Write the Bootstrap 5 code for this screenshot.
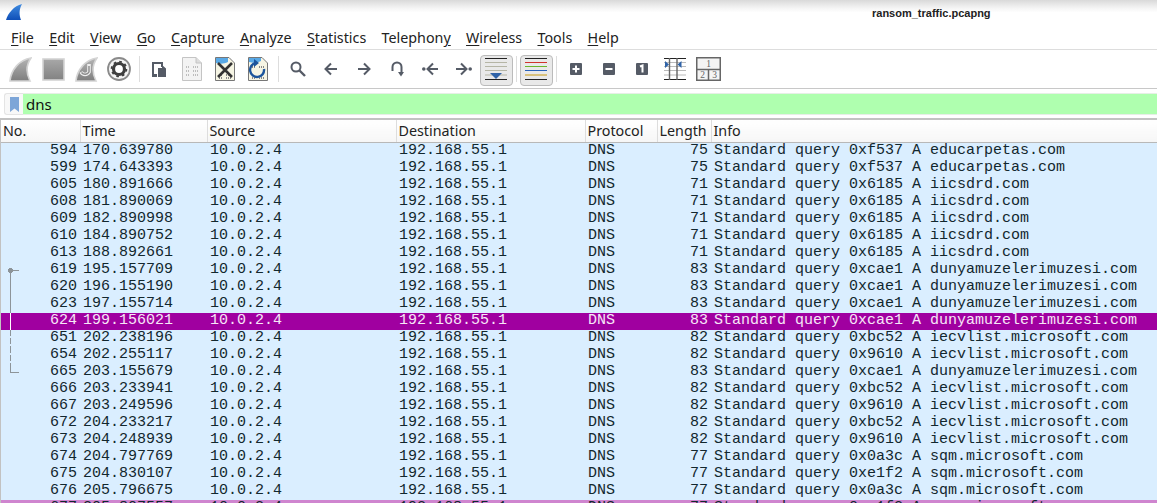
<!DOCTYPE html>
<html lang="en">
<head>
<meta charset="UTF-8">
<title>ransom_traffic.pcapng</title>
<link href="https://cdn.jsdelivr.net/npm/bootstrap@5.3.0/dist/css/bootstrap.min.css" rel="stylesheet">
<script src="https://cdn.jsdelivr.net/npm/bootstrap@5.3.0/dist/js/bootstrap.bundle.min.js"></script>
<style>
    html, body { height: 100%; }
    body { overflow: hidden; background: #fff; font-family: "Noto Sans", sans-serif; color: #222; }
    .titlebar { height: 25px; background: linear-gradient(#d9d9d9, #f4f4f4 32%, #fff 50%); padding-left: 6px; padding-top: 4px; }
    .winname { font-family: "Liberation Sans", sans-serif; font-weight: 700; font-size: 11px; left: 872px; top: 5px; color: #222; }
    .menubar { height: 25px; border-bottom: 1px solid #ddd; padding-left: 11px; font-size: 14.3px; line-height: 25px; gap: 15.3px; }
    .menubar u { text-underline-offset: 2px; text-decoration-thickness: 1px; }
    .toolstrip { height: 39px; padding-left: 3.5px; border-bottom: 1px solid #c8c8c8; }
    .toolbtn { width: 33px; height: 37px; flex: none; }
    .toolbtn.pressed::before { content: ""; position: absolute; left: 0; right: 0; top: 4px; bottom: 2px; background: #e9e9e9; border: 1px solid #bbb; border-radius: 4px; }
    .toolbtn svg { position: relative; }
    .toolsep { width: 7px; height: 26px; flex: none; }
    .toolsep::before { content: ""; display: block; width: 1px; height: 100%; margin: 0 auto; background: #ddd; }
    .filterbar { height: 31px; padding: 4px 0 0 4px; border-bottom: 2px solid #c2c2c2; }
    .markbtn { width: 19px; height: 22px; border: 1px solid #e4e4e4; border-right: 0; border-radius: 3px 0 0 3px; background: #f8f8f8; flex: none; }
    .filtertext { background: #afffaf; height: 22px; line-height: 20px; font-size: 15px; padding-left: 3px; color: #111; border-top: 1px solid #e6efe6; border-bottom: 1px solid #e6efe6; }
    .pktwrap { border-left: 1px solid #c2c2c2; }
    .pkt { table-layout: fixed; width: 1156px; border-collapse: collapse; font-family: "Liberation Mono", monospace; font-size: 15px; }
    .pkt th { height: 22px; padding: 1px 0 0 2px; background: linear-gradient(#fff, #f6f6f6); font-family: "Noto Sans", sans-serif; font-weight: 400; font-size: 14.3px; line-height: 20px; color: #222; border-right: 1px solid #ddd; border-bottom: 1px solid #b8b8b8; white-space: nowrap; overflow: hidden; }
    .pkt td { height: 17px; padding: 0 3px 2px; line-height: 15px; vertical-align: top; background: #daeeff; color: #12272e; white-space: nowrap; overflow: hidden; }
    .pkt th:last-child { border-right: 0; }
    .pkt tr.picked td { background: #a000a0; color: #f7e6f7; }
    .pkt tr.bad td { background: #cf85cf; }
    .rel { position: relative; }
    .rel::before { content: ""; position: absolute; left: 9px; top: 0; bottom: 0; width: 1px; background: #8d9499; }
    .rel-start::before { top: 8px; }
    .rel-start::after { content: ""; position: absolute; left: 7px; top: 6px; width: 11px; height: 5px; background: radial-gradient(circle at 2.5px 2.5px, #8d9499 2.3px, transparent 2.7px), linear-gradient(#8d9499, #8d9499) 2px 2px / 9px 1px no-repeat; }
    .rel-sel::before { background: #fff; }
    .rel-dash::before { background: repeating-linear-gradient(#8d9499 0 6px, transparent 6px 8px); }
    .rel-end::before { bottom: 8px; }
    .rel-end::after { content: ""; position: absolute; left: 9px; top: 8px; width: 9px; height: 1px; background: #8d9499; }
    .paneno { font-family: "Liberation Serif", serif; font-size: 9.5px; fill: #666; text-anchor: middle; }
</style>
</head>
<body>

<svg width="0" height="0" class="position-absolute">
    <defs>
        <linearGradient id="finBlue" x1="0" y1="0" x2="0" y2="1"><stop offset="0" stop-color="#3f8be0"/><stop offset="1" stop-color="#0f4fb8"/></linearGradient>
        <linearGradient id="finGray" x1="0" y1="0" x2="0" y2="1"><stop offset="0" stop-color="#b4b4b4"/><stop offset="1" stop-color="#7e7e7e"/></linearGradient>
        <linearGradient id="sqGray" x1="0" y1="0" x2="0" y2="1"><stop offset="0" stop-color="#a8a8a8"/><stop offset="1" stop-color="#828282"/></linearGradient>
    </defs>
</svg>

<div class="titlebar position-relative">
    <svg class="d-block" width="17" height="16" viewBox="0 0 17 16"><path d="M0 16C2 9 8 2 16 0C13 5 13 11 15 16Z" fill="url(#finBlue)"/></svg>
    <span class="winname position-absolute">ransom_traffic.pcapng</span>
</div>

<nav class="menubar d-flex">
    <span><u>F</u>ile</span><span><u>E</u>dit</span><span><u>V</u>iew</span><span><u>G</u>o</span><span><u>C</u>apture</span><span><u>A</u>nalyze</span><span><u>S</u>tatistics</span><span>Telephon<u>y</u></span><span><u>W</u>ireless</span><span><u>T</u>ools</span><span><u>H</u>elp</span>
</nav>

<div class="toolstrip d-flex align-items-center">
    <div class="toolbtn d-flex align-items-center justify-content-center"><svg width="23" height="25" viewBox="0 0 23 25"><path d="M1 24C2 13 10 3 22 1C17 8 17 16 21 24Z" fill="url(#finGray)" stroke="#d4d4d4" stroke-width="1.6"/></svg></div>
    <div class="toolbtn d-flex align-items-center justify-content-center"><svg width="23" height="23" viewBox="0 0 23 23"><rect x="1" y="1" width="21" height="21" fill="url(#sqGray)" stroke="#d4d4d4" stroke-width="1.6"/></svg></div>
    <div class="toolbtn d-flex align-items-center justify-content-center"><svg width="23" height="25" viewBox="0 0 23 25"><path d="M1 24C2 13 10 3 22 1C17 8 17 16 21 24Z" fill="url(#finGray)" stroke="#d4d4d4" stroke-width="1.6"/><path d="M14 7V15A4.5 4.5 0 0 1 6 15" fill="none" stroke="#eee" stroke-width="3.6"/><path d="M14 9V15A4.5 4.5 0 0 1 6.500 15.500" fill="none" stroke="#8a8a8a" stroke-width="1.4"/></svg></div>
    <div class="toolbtn d-flex align-items-center justify-content-center"><svg width="24" height="24" viewBox="0 0 24 24"><circle cx="12" cy="12" r="11" fill="#f4f4f4" stroke="#8a8a8a" stroke-width="1.8"/><circle cx="12" cy="12" r="5.500" fill="#fff" stroke="#3e3e3e" stroke-width="3.200"/><circle cx="12" cy="12" r="7.400" fill="none" stroke="#3e3e3e" stroke-width="1.800" stroke-dasharray="2.600 3.210"/></svg></div>
    <div class="toolsep"></div>
    <div class="toolbtn d-flex align-items-center justify-content-center"><svg width="15" height="15" viewBox="0 0 15 15"><path d="M0 0H11V5H5V15H0Z" fill="#555b66"/><path d="M2 2H9V5H5V12H2Z" fill="#fff"/><path d="M6 6H10V3L14 6.500V15H6Z" fill="#555b66"/></svg></div>
    <div class="toolbtn d-flex align-items-center justify-content-center"><svg width="20" height="24" viewBox="0 0 20 24"><path d="M.5.500H14L19.500 6V23.500H.5Z" fill="#f3f3f3" stroke="#c4c4c4"/><path d="M14 .5V6H19.500" fill="#ddd" stroke="#c4c4c4"/><path d="M4 10H8M11 10H16M4 14H8M11 14H16M4 18H8M11 18H16" stroke="#bdbdbd" stroke-width="2" stroke-dasharray="1 1"/></svg></div>
    <div class="toolbtn d-flex align-items-center justify-content-center"><svg width="20" height="24" viewBox="0 0 20 24"><path d="M.5.500H14L19.500 6V23.500H.5Z" fill="#f6f5e4" stroke="#777"/><path d="M1 1H13V5C9 7 5 7 1 6Z" fill="#59a9e6"/><path d="M4 18H8M11 18H16M4 21H8M11 21H16" stroke="#888" stroke-width="2" stroke-dasharray="1 1"/><path d="M3 6L17 20M17 6L3 20" stroke="#333" stroke-width="2.600"/></svg></div>
    <div class="toolbtn d-flex align-items-center justify-content-center"><svg width="20" height="24" viewBox="0 0 20 24"><path d="M.5.500H14L19.500 6V23.500H.5Z" fill="#f6f5e4" stroke="#777"/><path d="M1 1H13V4C9 6 5 6 1 5Z" fill="#59a9e6"/><path d="M4 10H8M11 10H16M4 21H8M11 21H16" stroke="#888" stroke-width="2" stroke-dasharray="1 1"/><path d="M8 6A7 7 0 1 0 16 12" fill="none" stroke="#1c559c" stroke-width="2.400"/><path d="M6 2V10L11 6Z" fill="#1c559c"/></svg></div>
    <div class="toolsep"></div>
    <div class="toolbtn d-flex align-items-center justify-content-center"><svg width="16" height="16" viewBox="0 0 16 16"><circle cx="6" cy="6" r="4.500" fill="none" stroke="#555b66" stroke-width="2"/><path d="M9.500 9.500L15 15" stroke="#555b66" stroke-width="2.400"/></svg></div>
    <div class="toolbtn d-flex align-items-center justify-content-center"><svg width="14" height="14" viewBox="0 0 14 14"><path d="M13 7H2M7 1.500L1.500 7L7 12.500" fill="none" stroke="#555b66" stroke-width="2"/></svg></div>
    <div class="toolbtn d-flex align-items-center justify-content-center"><svg width="14" height="14" viewBox="0 0 14 14"><path d="M1 7H12M7 1.500L12.500 7L7 12.500" fill="none" stroke="#555b66" stroke-width="2"/></svg></div>
    <div class="toolbtn d-flex align-items-center justify-content-center"><svg width="13" height="16" viewBox="0 0 13 16"><path d="M1.500 10V6A4.500 4.500 0 0 1 10.500 6V12" fill="none" stroke="#555b66" stroke-width="2"/><path d="M7 11H13L10 15.500Z" fill="#555b66"/></svg></div>
    <div class="toolbtn d-flex align-items-center justify-content-center"><svg width="17" height="14" viewBox="0 0 17 14"><circle cx="1.800" cy="7" r="1.800" fill="#555b66"/><path d="M16 7H6M11 1.500L5.500 7L11 12.500" fill="none" stroke="#555b66" stroke-width="2"/></svg></div>
    <div class="toolbtn d-flex align-items-center justify-content-center"><svg width="17" height="14" viewBox="0 0 17 14"><circle cx="15.200" cy="7" r="1.800" fill="#555b66"/><path d="M1 7H11M6 1.500L11.500 7L6 12.500" fill="none" stroke="#555b66" stroke-width="2"/></svg></div>
    <div class="toolbtn pressed position-relative d-flex align-items-center justify-content-center"><svg width="22" height="22" viewBox="0 0 22 22"><path d="M0 .5H22M0 21.500H22" stroke="#222"/><path d="M0 4.500H22M0 8.500H22M0 12.500H22M0 17H22" stroke="#b5b5a5"/><path d="M5 15H17L11 21Z" fill="#2f63a8"/></svg></div>
    <div class="toolsep"></div>
    <div class="toolbtn pressed position-relative d-flex align-items-center justify-content-center"><svg width="22" height="22" viewBox="0 0 22 22"><path d="M0 .5H22M0 21.500H22" stroke="#222"/><path d="M0 4.500H22" stroke="#d0342c"/><path d="M0 8.500H22" stroke="#6cb52d"/><path d="M0 12.500H22" stroke="#2a62b8"/><path d="M0 17H22" stroke="#c89a10"/></svg></div>
    <div class="toolsep"></div>
    <div class="toolbtn d-flex align-items-center justify-content-center"><svg width="12" height="12" viewBox="0 0 12 12"><rect width="12" height="12" rx="1" fill="#555b66"/><path d="M6 2.500V9.500M2.500 6H9.500" stroke="#fff" stroke-width="2"/></svg></div>
    <div class="toolbtn d-flex align-items-center justify-content-center"><svg width="12" height="12" viewBox="0 0 12 12"><rect width="12" height="12" rx="1" fill="#555b66"/><path d="M2.500 6H9.500" stroke="#fff" stroke-width="2"/></svg></div>
    <div class="toolbtn d-flex align-items-center justify-content-center"><svg width="12" height="12" viewBox="0 0 12 12"><rect width="12" height="12" rx="1" fill="#555b66"/><path d="M4 3.500L6.500 2.500V9.500" fill="none" stroke="#fff" stroke-width="2"/></svg></div>
    <div class="toolbtn d-flex align-items-center justify-content-center"><svg width="22" height="22" viewBox="0 0 22 22"><path d="M0 .5H22M0 21.500H22" stroke="#222"/><path d="M0 4.500H22M0 8.500H22M0 12.500H22M0 17H22" stroke="#bbb"/><path d="M5.500 0V22M13 0V22" stroke="#666" stroke-width="1.400"/><path d="M1 3V10L5 6.500ZM17.500 3V10L13.500 6.500Z" fill="#2f63a8"/></svg></div>
    <div class="toolbtn d-flex align-items-center justify-content-center"><svg width="25" height="24" viewBox="0 0 25 24"><rect x=".75" y=".75" width="23.500" height="22.500" fill="#f4f4f4" stroke="#666" stroke-width="1.500"/><path d="M1 12.500H24M12.500 12.500V23" stroke="#666" stroke-width="1.500"/><text class="paneno" x="12.500" y="9.500">1</text><text class="paneno" x="6.500" y="21">2</text><text class="paneno" x="18.500" y="21">3</text></svg></div>
</div>

<div class="filterbar d-flex">
    <div class="markbtn d-flex align-items-center justify-content-center"><svg width="9" height="15" viewBox="0 0 9 15"><path d="M0 0H9V15L4.500 11.500L0 15Z" fill="#7da6d8"/></svg></div>
    <div class="filtertext flex-grow-1">dns</div>
</div>

<div class="pktwrap">
<table class="pkt">
    <colgroup><col style="width:79px"><col style="width:127px"><col style="width:189px"><col style="width:189px"><col style="width:72px"><col style="width:54px"><col></colgroup>
    <thead><tr><th>No.</th><th>Time</th><th>Source</th><th>Destination</th><th>Protocol</th><th>Length</th><th>Info</th></tr></thead>
    <tbody>
        <tr><td class="text-end">594</td><td>170.639780</td><td>10.0.2.4</td><td>192.168.55.1</td><td>DNS</td><td class="text-end">75</td><td>Standard query 0xf537 A educarpetas.com</td></tr>
        <tr><td class="text-end">599</td><td>174.643393</td><td>10.0.2.4</td><td>192.168.55.1</td><td>DNS</td><td class="text-end">75</td><td>Standard query 0xf537 A educarpetas.com</td></tr>
        <tr><td class="text-end">605</td><td>180.891666</td><td>10.0.2.4</td><td>192.168.55.1</td><td>DNS</td><td class="text-end">71</td><td>Standard query 0x6185 A iicsdrd.com</td></tr>
        <tr><td class="text-end">608</td><td>181.890069</td><td>10.0.2.4</td><td>192.168.55.1</td><td>DNS</td><td class="text-end">71</td><td>Standard query 0x6185 A iicsdrd.com</td></tr>
        <tr><td class="text-end">609</td><td>182.890998</td><td>10.0.2.4</td><td>192.168.55.1</td><td>DNS</td><td class="text-end">71</td><td>Standard query 0x6185 A iicsdrd.com</td></tr>
        <tr><td class="text-end">610</td><td>184.890752</td><td>10.0.2.4</td><td>192.168.55.1</td><td>DNS</td><td class="text-end">71</td><td>Standard query 0x6185 A iicsdrd.com</td></tr>
        <tr><td class="text-end">613</td><td>188.892661</td><td>10.0.2.4</td><td>192.168.55.1</td><td>DNS</td><td class="text-end">71</td><td>Standard query 0x6185 A iicsdrd.com</td></tr>
        <tr><td class="text-end rel rel-start">619</td><td>195.157709</td><td>10.0.2.4</td><td>192.168.55.1</td><td>DNS</td><td class="text-end">83</td><td>Standard query 0xcae1 A dunyamuzelerimuzesi.com</td></tr>
        <tr><td class="text-end rel">620</td><td>196.155190</td><td>10.0.2.4</td><td>192.168.55.1</td><td>DNS</td><td class="text-end">83</td><td>Standard query 0xcae1 A dunyamuzelerimuzesi.com</td></tr>
        <tr><td class="text-end rel">623</td><td>197.155714</td><td>10.0.2.4</td><td>192.168.55.1</td><td>DNS</td><td class="text-end">83</td><td>Standard query 0xcae1 A dunyamuzelerimuzesi.com</td></tr>
        <tr class="picked"><td class="text-end rel rel-sel">624</td><td>199.156021</td><td>10.0.2.4</td><td>192.168.55.1</td><td>DNS</td><td class="text-end">83</td><td>Standard query 0xcae1 A dunyamuzelerimuzesi.com</td></tr>
        <tr><td class="text-end rel rel-dash">651</td><td>202.238196</td><td>10.0.2.4</td><td>192.168.55.1</td><td>DNS</td><td class="text-end">82</td><td>Standard query 0xbc52 A iecvlist.microsoft.com</td></tr>
        <tr><td class="text-end rel rel-dash">654</td><td>202.255117</td><td>10.0.2.4</td><td>192.168.55.1</td><td>DNS</td><td class="text-end">82</td><td>Standard query 0x9610 A iecvlist.microsoft.com</td></tr>
        <tr><td class="text-end rel rel-end">665</td><td>203.155679</td><td>10.0.2.4</td><td>192.168.55.1</td><td>DNS</td><td class="text-end">83</td><td>Standard query 0xcae1 A dunyamuzelerimuzesi.com</td></tr>
        <tr><td class="text-end">666</td><td>203.233941</td><td>10.0.2.4</td><td>192.168.55.1</td><td>DNS</td><td class="text-end">82</td><td>Standard query 0xbc52 A iecvlist.microsoft.com</td></tr>
        <tr><td class="text-end">667</td><td>203.249596</td><td>10.0.2.4</td><td>192.168.55.1</td><td>DNS</td><td class="text-end">82</td><td>Standard query 0x9610 A iecvlist.microsoft.com</td></tr>
        <tr><td class="text-end">672</td><td>204.233217</td><td>10.0.2.4</td><td>192.168.55.1</td><td>DNS</td><td class="text-end">82</td><td>Standard query 0xbc52 A iecvlist.microsoft.com</td></tr>
        <tr><td class="text-end">673</td><td>204.248939</td><td>10.0.2.4</td><td>192.168.55.1</td><td>DNS</td><td class="text-end">82</td><td>Standard query 0x9610 A iecvlist.microsoft.com</td></tr>
        <tr><td class="text-end">674</td><td>204.797769</td><td>10.0.2.4</td><td>192.168.55.1</td><td>DNS</td><td class="text-end">77</td><td>Standard query 0x0a3c A sqm.microsoft.com</td></tr>
        <tr><td class="text-end">675</td><td>204.830107</td><td>10.0.2.4</td><td>192.168.55.1</td><td>DNS</td><td class="text-end">77</td><td>Standard query 0xe1f2 A sqm.microsoft.com</td></tr>
        <tr><td class="text-end">676</td><td>205.796675</td><td>10.0.2.4</td><td>192.168.55.1</td><td>DNS</td><td class="text-end">77</td><td>Standard query 0x0a3c A sqm.microsoft.com</td></tr>
        <tr class="bad"><td class="text-end">677</td><td>205.807557</td><td>10.0.2.4</td><td>192.168.55.1</td><td>DNS</td><td class="text-end">77</td><td>Standard query 0xe1f2 A sqm.microsoft.com</td></tr>
    </tbody>
</table>
</div>

</body>
</html>
